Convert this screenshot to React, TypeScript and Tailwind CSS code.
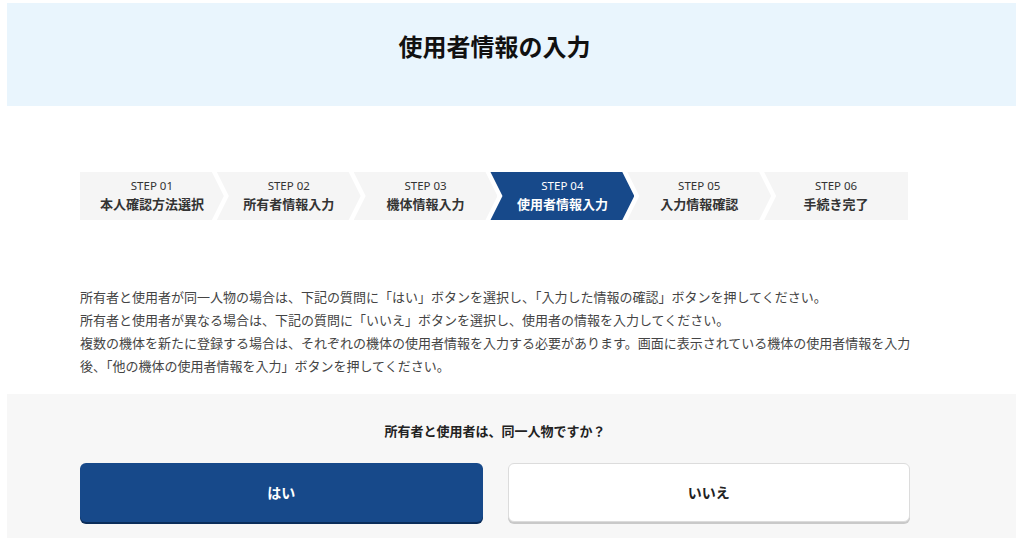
import type { ReactNode } from "react";

const STEPS = [
  { no: "01", label: "本人確認方法選択" },
  { no: "02", label: "所有者情報入力" },
  { no: "03", label: "機体情報入力" },
  { no: "04", label: "使用者情報入力" },
  { no: "05", label: "入力情報確認" },
  { no: "06", label: "手続き完了" },
];

// 矢印型のステップ（先頭は左端フラット、末尾は右端フラット）
function Step({ no, label, index }: { no: string; label: string; index: number }) {
  const active = index === 3;
  const first = index === 0;
  const last = index === STEPS.length - 1;
  const clip = first
    ? "polygon(0 0, calc(100% - 12px) 0, 100% 50%, calc(100% - 12px) 100%, 0 100%)"
    : last
      ? "polygon(0 0, 100% 0, 100% 100%, 0 100%, 12px 50%)"
      : "polygon(0 0, calc(100% - 12px) 0, 100% 50%, calc(100% - 12px) 100%, 0 100%, 12px 50%)";
  return (
    <div
      className={`flex h-[48px] flex-1 flex-col items-center justify-center pb-[2px] ${first ? "" : "-ml-[7px]"} ${
        active ? "bg-[#17498a] text-white" : "bg-[#f5f5f5] text-[#333]"
      }`}
      style={{ clipPath: clip }}
    >
      <span className="font-['Noto_Sans'] text-[11.5px] leading-[15px]">STEP {no}</span>
      <span className="mt-[2px] text-[13px] font-bold leading-[17px]">{label}</span>
    </div>
  );
}

function ChoiceButton({ children, primary }: { children: ReactNode; primary?: boolean }) {
  return (
    <button
      type="button"
      className={`flex h-[59px] w-[403px] items-center justify-center rounded-[6px] text-[14px] font-bold ${
        primary
          ? "bg-[#17498a] text-white shadow-[0_2px_0_#0b2d5a]"
          : "border border-[#dcdcdc] bg-white text-[#222] shadow-[0_2px_0_#c9c9c9]"
      }`}
    >
      {children}
    </button>
  );
}

export default function App() {
  return (
    <div
      className="h-[538px] w-[1024px] overflow-hidden bg-white pt-[3px]"
      style={{ fontFamily: '"Noto Sans CJK JP", "Noto Sans", sans-serif' }}
    >
      {/* ページ見出し */}
      <header className="ml-[7px] flex h-[103px] w-[1009px] items-start justify-center bg-[#e9f5fd] pr-[34px] pt-[27px]">
        <h1 className="text-[24px] font-bold leading-[32px] text-[#111]">使用者情報の入力</h1>
      </header>

      <div className="ml-[80px] w-[830px]">
        {/* ステップ */}
        <div className="mt-[66px] flex w-[828px]">
          {STEPS.map((s, i) => (
            <Step key={s.no} no={s.no} label={s.label} index={i} />
          ))}
        </div>

        {/* 説明文 */}
        <p className="mt-[65px] w-[834px] text-[13px] leading-[23px] text-[#444]">
          所有者と使用者が同一人物の場合は、下記の質問に「はい」ボタンを選択し、「入力した情報の確認」ボタンを押してください。
          <br />
          所有者と使用者が異なる場合は、下記の質問に「いいえ」ボタンを選択し、使用者の情報を入力してください。
          <br />
          複数の機体を新たに登録する場合は、それぞれの機体の使用者情報を入力する必要があります。画面に表示されている機体の使用者情報を入力後、「他の機体の使用者情報を入力」ボタンを押してください。
        </p>
      </div>

      {/* 質問 */}
      <section className="ml-[7px] mt-[17px] h-[200px] w-[1009px] bg-[#f7f7f7] pt-[27px]">
        <div className="ml-[73px] w-[830px]">
          <p className="text-center text-[13px] font-bold leading-[20px] text-[#222]">
            所有者と使用者は、同一人物ですか？
          </p>
          <div className="mt-[22px] flex gap-[25px]">
            <ChoiceButton primary>はい</ChoiceButton>
            <ChoiceButton>いいえ</ChoiceButton>
          </div>
        </div>
      </section>
    </div>
  );
}
